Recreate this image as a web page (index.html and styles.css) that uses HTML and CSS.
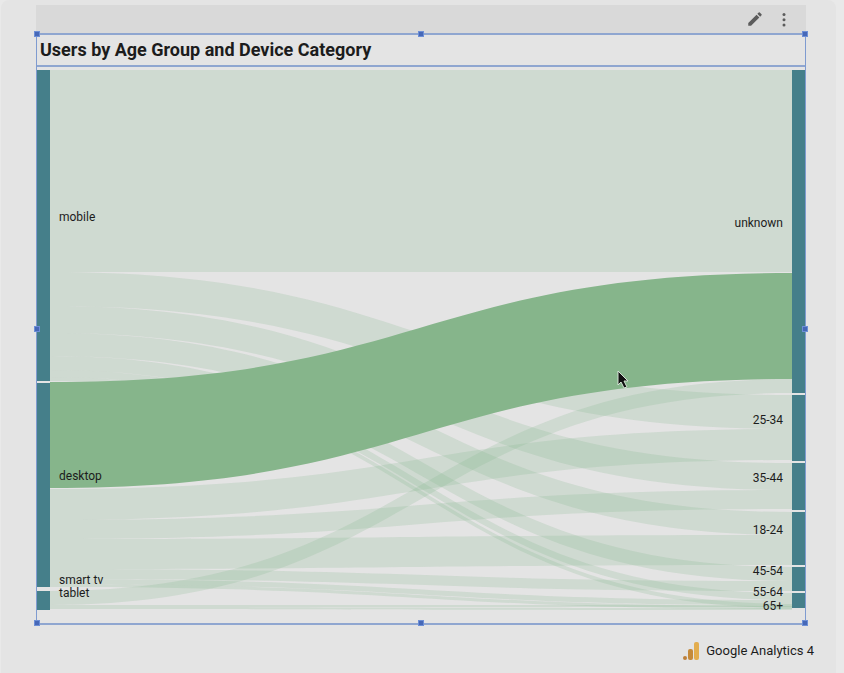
FILE: index.html
```html
<!DOCTYPE html>
<html lang="en">
<head>
  <meta charset="UTF-8" />
  <meta name="viewport" content="width=device-width, initial-scale=1.0"/>
  <title>Users by Age Group and Device Category</title>
  <link rel="stylesheet" href="styles.css">
</head>
<body>
  <main class="page">
    <div class="toolbar">
      <button class="icon-button" aria-label="Edit">
        <svg width="18" height="18" viewBox="0 0 24 24"><path d="M3 17.25V21h3.75L17.81 9.94l-3.75-3.75L3 17.25zM20.71 7.04a1 1 0 0 0 0-1.41l-2.34-2.34a1 1 0 0 0-1.41 0l-1.83 1.83 3.75 3.75 1.83-1.83z"/></svg>
      </button>
      <button class="icon-button" aria-label="More options">
        <svg width="18" height="18" viewBox="0 0 24 24"><circle cx="12" cy="6" r="2"/><circle cx="12" cy="13" r="2"/><circle cx="12" cy="20" r="2"/></svg>
      </button>
    </div>

    <section class="widget">
      <h1 class="widget-title">Users by Age Group and Device Category</h1>

      <svg class="sankey" viewBox="0 0 768 556" role="img" aria-label="Device category to age group">
        <g id="links"></g>
        <g id="nodes"></g>
        <g class="labels">
          <text x="22" y="154">mobile</text>
          <text x="22" y="413">desktop</text>
          <text x="22" y="517">smart tv</text>
          <text x="22" y="530">tablet</text>
        </g>
        <g class="labels labels-right">
          <text x="746" y="160">unknown</text>
          <text x="746" y="357">25-34</text>
          <text x="746" y="415">35-44</text>
          <text x="746" y="467">18-24</text>
          <text x="746" y="508">45-54</text>
          <text x="746" y="529">55-64</text>
          <text x="746" y="543">65+</text>
        </g>
        <path class="cursor" d="M581 304v14l3-3 3 6 3-1-3-6h4z"/>
      </svg>

      <!-- Resize handles -->
      <span class="handle top left"></span>
      <span class="handle top center"></span>
      <span class="handle top right"></span>
      <span class="handle middle left"></span>
      <span class="handle middle right"></span>
      <span class="handle bottom left"></span>
      <span class="handle bottom center"></span>
      <span class="handle bottom right"></span>
    </section>

    <footer class="source">
      <svg width="18" height="18" viewBox="0 0 18 18">
        <rect x="12" y="0" width="5" height="18" rx="2" fill="#e3ad4e"/>
        <rect x="6" y="7" width="5" height="11" rx="2" fill="#c58a3a"/>
        <circle cx="3" cy="16" r="2" fill="#bd803a"/>
      </svg>
      <span>Google Analytics 4</span>
    </footer>
  </main>

  <script>
    const svgNS = 'http://www.w3.org/2000/svg';
    const leftEdge = 13;
    const rightEdge = 755;

    // [source y, target y, thickness]
    const links = [
      // mobile
      [3, 3, 202], [205, 328, 34], [239, 396, 27], [266, 445, 23],
      [289, 500, 14], [303, 526, 7], [310, 537, 4],
      // desktop
      [422, 362, 31], [453, 423, 19], [472, 468, 30], [502, 514, 10],
      [512, 533, 5], [517, 539, 3],
      // tablet
      [524, 312, 14], [538, 538, 2], [540, 541, 2]
    ];
    const activeLink = [315, 206, 106];

    // [x, y, height]
    const nodes = [
      [0, 3, 311], [0, 316, 204], [0, 524, 19],
      [755, 3, 323], [755, 328, 66], [755, 396, 47], [755, 445, 53],
      [755, 500, 24], [755, 526, 15]
    ];

    function addLink(link, className) {
      const [y0, y1, h] = link;
      const mid = (leftEdge + rightEdge) / 2;
      const path = document.createElementNS(svgNS, 'path');
      path.setAttribute('class', className);
      path.setAttribute('d',
        `M${leftEdge} ${y0}C${mid} ${y0} ${mid} ${y1} ${rightEdge} ${y1}` +
        `v${h}C${mid} ${y1 + h} ${mid} ${y0 + h} ${leftEdge} ${y0 + h}z`);
      document.getElementById('links').appendChild(path);
    }

    function addNode(node) {
      const rect = document.createElementNS(svgNS, 'rect');
      rect.setAttribute('class', 'node');
      rect.setAttribute('x', node[0]);
      rect.setAttribute('y', node[1]);
      rect.setAttribute('width', 13);
      rect.setAttribute('height', node[2]);
      document.getElementById('nodes').appendChild(rect);
    }

    links.forEach(link => addLink(link, 'link'));
    addLink(activeLink, 'link-active');
    nodes.forEach(addNode);
  </script>
</body>
</html>
```
FILE: styles.css
```css
body {
  font-family: Roboto, sans-serif;
  background-color: #e9e9e9;
  color: #1c1c1c;
  margin: 0;
}

.page {
  background-color: #e4e4e4;
  border-radius: 8px 8px 0 0;
  margin: 0 8px 0 1px;
  padding: 5px 30px 12px 35px;
}

.toolbar {
  display: flex;
  justify-content: flex-end;
  align-items: center;
  gap: 11px;
  height: 28px;
  padding-right: 13px;
  background-color: #d9d9d9;
}

.icon-button {
  display: flex;
  padding: 0;
  border: none;
  background: none;
  cursor: pointer;
}

.icon-button svg {
  fill: #5c5c5c;
}

.widget {
  position: relative;
  border: 1px solid #7f9bd0;
  border-top: 2px solid #8fa6d0;
  border-bottom: 2px solid #8fa6d0;
}

.widget-title {
  margin: 0;
  padding: 0 3px;
  font-size: 18px;
  font-weight: 700;
  line-height: 30px;
  border-bottom: 2px solid #8fa6d0;
}

.sankey {
  display: block;
  width: 100%;
  height: auto;
}

.link {
  fill: #85b58b;
  fill-opacity: 0.22;
}

.link-active {
  fill: #86b58b;
}

.node {
  fill: #457f8a;
}

.labels {
  font-size: 12px;
  fill: #1c1c1c;
}

.labels-right {
  text-anchor: end;
}

.cursor {
  fill: #111;
  stroke: #d5e2d6;
  stroke-width: 1;
}

.handle {
  position: absolute;
  width: 4px;
  height: 4px;
  background-color: #4668b8;
  border: 1px solid #6d8fd6;
  transform: translate(-50%, -50%);
}

.top { top: -1px; }
.middle { top: 50%; }
.bottom { top: 100%; }
.left { left: 0; }
.center { left: 50%; }
.right { left: 100%; }

.source {
  display: flex;
  justify-content: flex-end;
  align-items: center;
  gap: 6px;
  margin-top: 16px;
  margin-right: -8px;
  font-size: 13px;
  line-height: 20px;
}
```
